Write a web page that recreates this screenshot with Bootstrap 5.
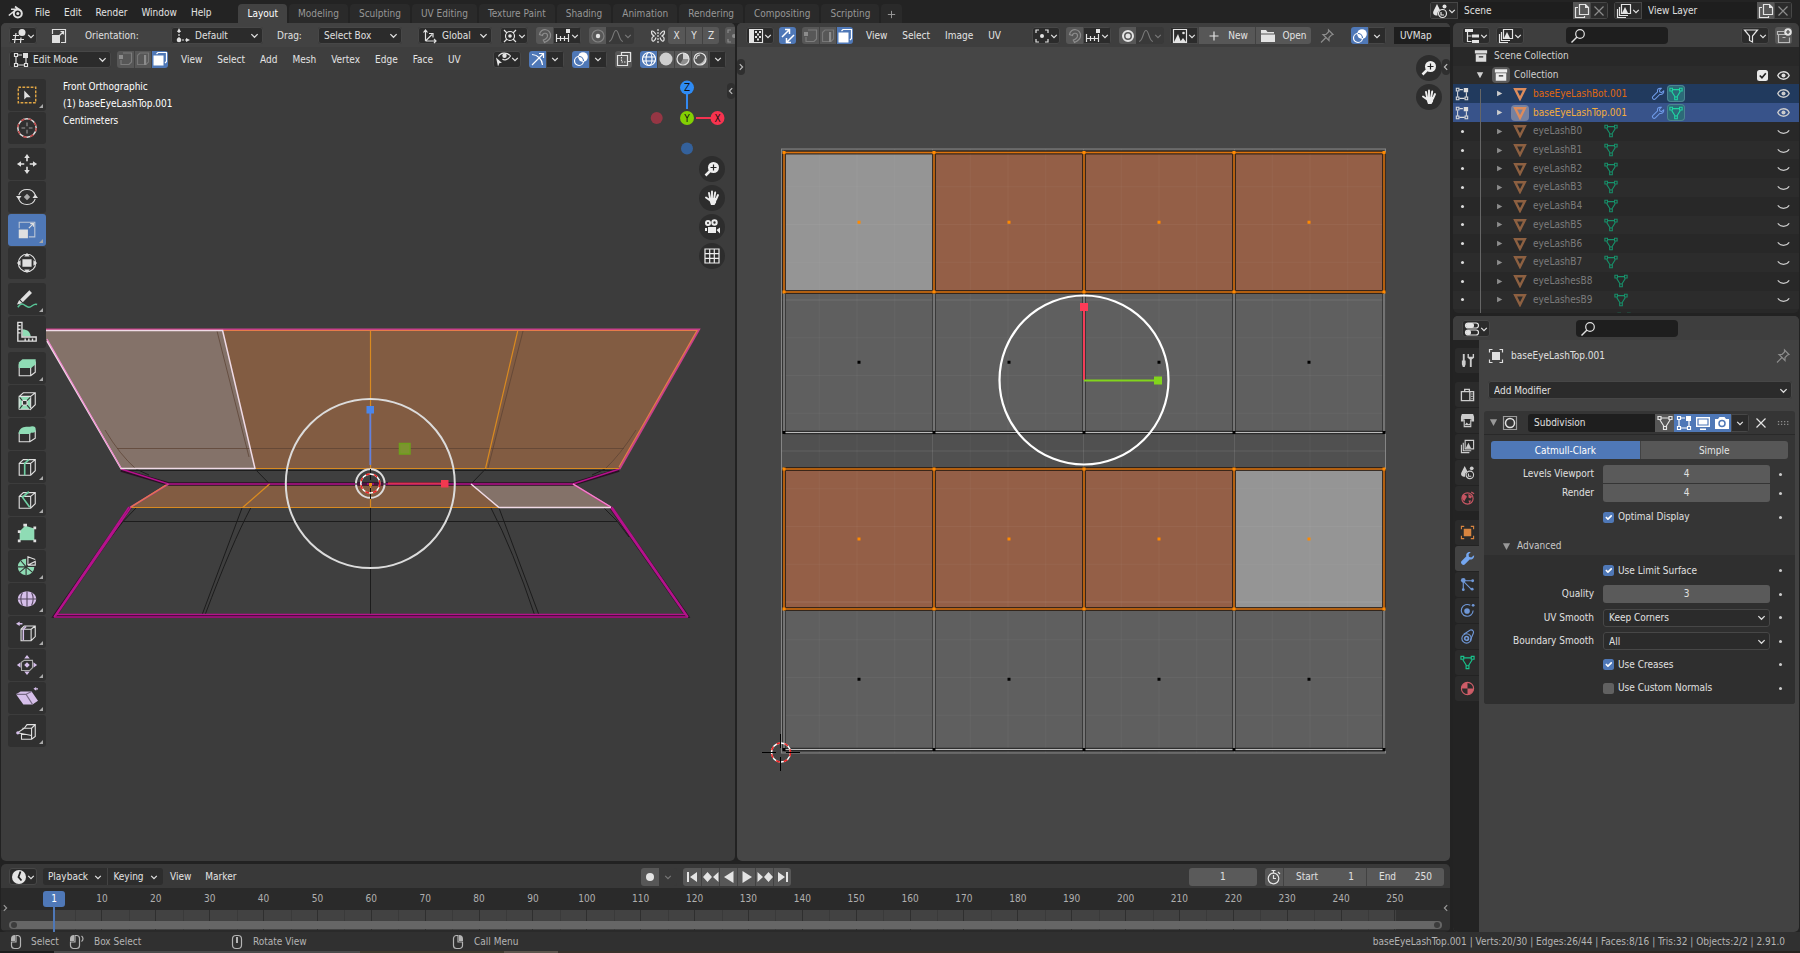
<!DOCTYPE html>
<html lang="en">
<head>
<meta charset="utf-8">
<meta name="viewport" content="width=device-width, initial-scale=1">
<title>Blender</title>
<link href="https://cdn.jsdelivr.net/npm/bootstrap@5.3.0/dist/css/bootstrap.min.css" rel="stylesheet">
<style>
:root{--blue:#4f78b7;--menu:#2b2b2b;--btn:#575757;--field:#1e1e1e;--edge:#474747}
html,body{height:100%}
body{background:#222;color:#e0e0e0;font:10px/16px "DejaVu Sans Condensed","DejaVu Sans",sans-serif;font-stretch:condensed;overflow:hidden}
button,input,select{font:inherit;color:inherit}
.app{height:100vh}
.ic{width:16px;height:16px;display:block;flex:none;fill:none;stroke:currentColor;stroke-width:1.2}
.f{fill:currentColor;stroke:none}
.ch{width:8px;height:8px}
[data-i]{display:inline-flex;flex:none}
.btn{--bs-btn-padding-x:0;--bs-btn-padding-y:0;--bs-btn-font-size:10px;--bs-btn-line-height:17px;--bs-btn-color:#e4e4e4;--bs-btn-hover-color:#fff;--bs-btn-border-width:0;--bs-btn-border-radius:3px;height:17px;display:inline-flex;align-items:center;justify-content:center;flex:none}
.sq{width:17px;background:var(--btn)}
.sq.on{background:var(--blue);color:#fff}
.dim{color:#8c8c8c}
.drop{width:28px;background:var(--menu);box-shadow:inset 0 0 0 1px var(--edge)}
.drop2{width:18px;background:var(--menu);box-shadow:inset 0 0 0 1px var(--edge)}
.off{background:#393939;color:#777;box-shadow:none}
.bar{display:flex;align-items:center;height:24px;padding-top:1px;flex:none;background:#3e3e3e}
.bar>*{flex:none}
.grp{display:flex;border-radius:3px;overflow:hidden;flex:none}
.grp .btn{border-radius:0}
.grp.cells .btn+.btn{border-left:1px solid #424242}
.form-select{height:17px;padding:0 14px 0 6px;font-size:10px;line-height:17px;color:#e0e0e0;background-color:var(--menu);border:0;box-shadow:inset 0 0 0 1px var(--edge);border-radius:3px;flex:none;background-size:9px 9px;background-position:right 4px center;background-image:url("data:image/svg+xml,%3csvg xmlns='http://www.w3.org/2000/svg' viewBox='0 0 10 10'%3e%3cpath fill='none' stroke='%23ddd' stroke-width='1.4' d='M1.5 3.5 5 7l3.5-3.5'/%3e%3c/svg%3e")}
.icsel{position:relative;display:flex;flex:none}
.icsel>[data-i]{position:absolute;left:4px;top:1px;pointer-events:none}
.icsel .form-select{padding-left:24px}
.w74{width:74px}.w84{width:84px}.w92{width:92px}.w102{width:102px}
.form-control{height:18px;min-height:0;padding:0 6px;font-size:10px;line-height:18px;color:#e0e0e0;background:var(--field);border:0;border-radius:0}
.mbtn{padding:0 7px;background:transparent}
.menus{display:flex;gap:1px;margin-left:6px}
.top{height:23px;background:#232323}
.top .nav-tabs{gap:2px;margin-left:20px}
.top .nav-link{height:19px;padding:0 9px;line-height:19px;color:#979797;background:#2a2a2a;border:0;border-radius:4px 4px 0 0}
.top .nav-link.active{background:#424242;color:#fff}
.top .form-control{width:115px;height:17px}
.ed{border-radius:5px;overflow:hidden;display:flex;flex-direction:column;min-width:0}
.v3d{flex:734 1 0;background:#3c3c3c}
.uved{flex:713 1 0;background:#464646}
.stage{position:relative;flex:1 1 0;min-height:0}
.stage>svg{position:absolute;inset:0;width:100%;height:100%}
.over{position:absolute;z-index:2}
.tools{left:7px;top:32px;display:flex;flex-direction:column;gap:4px}
.tools>div{display:flex;flex-direction:column;gap:1px}
.tools .btn{width:38px;height:32px;border-radius:3px;background:#303030;position:relative}
.tools .btn.on{background:var(--blue)}
.tools .ic{width:22px;height:22px;color:#e0e0e0}
.tools .more::after{content:"";position:absolute;right:3px;bottom:3px;border:2px solid;border-color:transparent #aaa #aaa transparent}
.mint{fill:#8fdcb5;stroke:none}.lilac{fill:#d6bfea;stroke:none}
.navb{right:10px;display:flex;flex-direction:column;gap:3px}
.navb .btn{width:26px;height:26px;border-radius:50%;background:#2d2d2d;color:#eee}
.info{left:62px;top:31px;line-height:17px;color:#fff}
.flap{width:8px;height:16px;background:#2f2f2f;border-radius:4px;color:#bbb;display:flex;align-items:center}
.side{width:346px;flex:none}
.outl{height:290px;background:#282828;flex:none}
.olist{display:grid;grid-template-rows:repeat(15,minmax(0,1fr));height:281px;position:relative;flex:none}
.olist>div{display:flex;align-items:center;padding-left:1px;color:#7c7c7c}
.olist>div>span{display:flex;align-items:center}
.olist>div:nth-child(even){background:#2c2c2c}
.olist>.s1{background:#213a5e!important;color:#e0690f}
.olist>.s2{background:#38538a!important;color:#f4ad3c}
.olist .c0{width:16px;height:16px;justify-content:center;color:#ddd}
.olist .tri{width:8px;margin-left:26px;color:#8d8d8d}
.olist .oi{width:18px;height:16px;margin:0 4px 0 7px;border-radius:4px;justify-content:center}
.olist .nameless{width:62px}
.dotm{width:3px;height:3px;border-radius:50%;background:#ddd}
.branch{position:absolute;left:27px;top:42px;width:1px;bottom:0;background:#666}
.chip{border-radius:4px;background:#2c6a78;box-shadow:inset 0 0 0 1px #4d8490;width:18px;height:17px;justify-content:center}
.chipg{background:#5a5a5a}
.props{flex:1 1 0;background:#424242}
.ptabs{width:26px;background:#232323;padding:8px 0 0 2px;display:flex;flex-direction:column;gap:1px;flex:none}
.ptabs .btn{width:24px;height:25px;border-radius:3px 0 0 3px;background:#2b2b2b}
.ptabs .btn.on{background:#424242}
.ptabs .sep{height:7px}
.panel{margin:12px 4px 0 5px;background:#353535;border-radius:3px;overflow:hidden}
.phead{height:24px;display:flex;align-items:center;border-bottom:1px solid #292929}
.prow{display:grid;grid-template-columns:110px 167px 1fr;column-gap:9px;align-items:center}
.prow>label:first-child,.prow>span:first-child{text-align:right}
.num{background:#5a5a5a;text-align:center;border-radius:3px}
.prow .dotm{justify-self:start;background:#ccc}
.form-check-input{width:11px;height:11px;margin:0 4px 0 0;border:0;border-radius:2px;background-color:#616161;float:none;flex:none}
.form-check-input:checked{background-color:var(--blue)}
.form-check-input.chk:checked{background-color:#e8e8e8;background-image:url("data:image/svg+xml,%3csvg xmlns='http://www.w3.org/2000/svg' viewBox='0 0 20 20'%3e%3cpath fill='none' stroke='%23222' stroke-width='3' d='m5 10 4 4 7-8'/%3e%3c/svg%3e")}
.mf{width:19px;height:18px}
.pl{width:18px;height:18px}
.sub{background:#2f2f2f;padding:4px 0}
.subg{display:grid;grid-template-rows:repeat(6,1fr);height:141px}
.tl{height:68px;background:#2a2a2a;flex:none;position:relative}
.nums{height:22px;padding:0 28px 0 74px;display:flex;color:#b0b0b0;align-items:center}
.nums span,.ticks span{flex:1 1 0;text-align:center}
.ticks{height:20px;padding:0 28px 0 74px;display:flex;background:linear-gradient(90deg,#373737 53px,#424242 53px,#424242 calc(100% - 54px),#333 calc(100% - 54px))}
.ticks span{background:linear-gradient(#2f2f2f,#2f2f2f) 50% 0/1px 100% no-repeat,linear-gradient(#3a3a3a,#3a3a3a) 0 0/1px 100% no-repeat}
.scr{left:8px;right:8px;bottom:3px;height:8px;border-radius:4px;background:#666}
.scr::before,.scr::after{content:"";position:absolute;top:1px;width:6px;height:6px;border-radius:50%;background:#3c3c3c}
.scr::before{left:2px}.scr::after{right:2px}
.now{left:42px;top:27px;width:22px;height:16px;border-radius:3px;background:var(--blue);color:#fff;text-align:center;line-height:16px}
.now::after{content:"";position:absolute;left:10px;top:16px;width:2px;height:25px;background:var(--blue)}
.nf{background:#585858;height:18px;display:flex;align-items:center;padding:0 12px;border-left:1px solid #424242}
.nf input{width:26px;background:none;border:0;padding:0;text-align:right}
.status{height:19px;background:#303030;color:#b4b4b4;flex:none;padding:0 15px 0 8px}
.under{height:2px;flex:none;background:linear-gradient(90deg,#1c1c1c 3%,#4a4a4a 3% 20%,#3e3a2e 20% 28%,#5c544c 28% 31%,#37302a 31% 80%,#26211e)}
.gz text{font:10px "DejaVu Sans Condensed","DejaVu Sans",sans-serif;text-anchor:middle;fill:#111}
</style>
</head>
<body>
<svg width="0" height="0" class="position-absolute"><defs>
<symbol id="chev" viewBox="0 0 10 10"><path d="M1.5 3.5 5 7l3.5-3.5" stroke-width="1.5"/></symbol>
<symbol id="lt" viewBox="0 0 10 10"><path d="M6.5 1.5 3 5l3.5 3.5" stroke-width="1.5"/></symbol>
<symbol id="gt" viewBox="0 0 10 10"><path d="M3.5 1.5 7 5 3.5 8.5" stroke-width="1.5"/></symbol>
<symbol id="dn" viewBox="0 0 10 10"><path class="f" d="M1 1.500h8L5 9z"/></symbol>
<symbol id="rt" viewBox="0 0 10 10"><path class="f" d="M1.500 1v8L9 5z"/></symbol>
<symbol id="logo" viewBox="0 0 16 16"><circle cx="9.800" cy="9.500" r="4" stroke-width="2"/><circle class="f" cx="9.800" cy="9.500" r="1.500"/><path stroke-width="1.600" d="M.8 11.500 8.500 5.300H3M7 2.500l6 4.500"/></symbol>
<symbol id="v3d" viewBox="0 0 16 16"><path d="M2 7.500h6M1 11.500h12M5 5 3.500 15M10 9.500 9.500 15"/><circle class="f" cx="11" cy="4.500" r="3.500"/></symbol>
<symbol id="scalei" viewBox="0 0 16 16"><path d="M1.500 6V1.500h13v13H10"/><path class="f" d="M1 7h8v8H1z"/><path d="m8.500 7.500 4-4M9.500 3.500h3v3"/></symbol>
<symbol id="ori" viewBox="0 0 16 16"><path d="M4 3v7M4 12h8" stroke-dasharray="2 1"/><path class="f" d="M4 0 6 4H2zM15 12l-4-2v4z"/><circle class="f" cx="4" cy="12" r="2.300"/></symbol>
<symbol id="glob" viewBox="0 0 16 16"><path d="M3.500 13V3M3.500 13h10M3.500 13 10 6.500M1.500 4.500 3.500 2l2 2.500M12 11l2 2-2 2M7 5.500h4v4"/></symbol>
<symbol id="pivot" viewBox="0 0 16 16"><circle cx="8" cy="8" r="4.500"/><circle class="f" cx="8" cy="8" r="1.800"/><path d="m2 2 3 3M14 2l-3 3M2 14l3-3M14 14l-3-3"/></symbol>
<symbol id="bpiv" viewBox="0 0 16 16"><path d="M2 5V2h3M11 2h3v3M14 11v3h-3M5 14H2v-3"/><circle class="f" cx="8" cy="8" r="2"/></symbol>
<symbol id="mag" viewBox="0 0 16 16"><path d="M2.500 6.500A5.500 5.500 0 0 1 13.500 8c0 3-3 5-6 6.500l-1.200-2.500C9 11 10.500 9.500 10.500 8A2.500 2.500 0 0 0 5.500 7.500z"/></symbol>
<symbol id="snapi" viewBox="0 0 16 16"><path d="M1.500 6v8M5.500 8v5M9.500 8v5M13.500 6v8M1.500 10.500h12"/><path class="f" d="M11 1h4v4h-4z"/></symbol>
<symbol id="prop" viewBox="0 0 16 16"><circle class="f" cx="8" cy="8" r="2.200"/><circle cx="8" cy="8" r="6" opacity=".3"/></symbol>
<symbol id="prop2" viewBox="0 0 16 16"><circle class="f" cx="8" cy="8" r="2.500"/><circle cx="8" cy="8" r="5" stroke-width="2"/></symbol>
<symbol id="fall" viewBox="0 0 16 16"><path d="M1 13.500c4 0 4-11 7-11s3 11 7 11"/></symbol>
<symbol id="mir" viewBox="0 0 16 16"><path d="M8 1v14" stroke-dasharray="2 1"/><path d="M6 6.500C4 3 1.500 2 1.500 4s1 3.500 3 4c-2 .5-3 2-2.500 4s3 1.500 4-2.500M10 6.500C12 3 14.500 2 14.500 4s-1 3.500-3 4c2 .5 3 2 2.500 4s-3 1.500-4-2.500"/></symbol>
<symbol id="edit" viewBox="0 0 16 16"><path d="M3 5v6M5 13h6M13 6v5M5 3h4" /><path d="M1.500 1.500h3v3h-3zM1.500 11.500h3v3h-3zM11.500 11.500h3v3h-3z"/><path class="f" d="M10 1h5v5h-5z"/></symbol>
<symbol id="sv" viewBox="0 0 16 16"><path d="M5 2h8.500v9L11 13.500H3V9" opacity=".7"/><path class="f" d="M1 4h4v4H1z"/></symbol>
<symbol id="se" viewBox="0 0 16 16"><path d="M2.500 4.500 5 2h8.500v9L11 13.500H2.500z" opacity=".6"/><path class="f" d="M9 4h2.200v10H9z"/></symbol>
<symbol id="sf" viewBox="0 0 16 16"><path d="M4.500 3 6 1.500h8.500v9L13 12"/><path class="f" d="M1.500 4.500h10v10h-10z"/></symbol>
<symbol id="vis" viewBox="0 0 16 16"><path d="M3.500 5.500C5 1.500 12 .5 15.500 5 13 9 9 9.500 7.500 8"/><circle class="f" cx="9.500" cy="4.800" r="2.200"/><path class="f" d="M1 6.500l6 5.500H4.500L3 15.500z"/></symbol>
<symbol id="giz" viewBox="0 0 16 16"><path d="M2 3.500A11 11 0 0 1 12.500 14M2 14 13 3M9 2.500h4.500V7"/></symbol>
<symbol id="ovl" viewBox="0 0 16 16"><circle class="f" cx="10" cy="6" r="4.800"/><circle cx="6" cy="10" r="4.500"/><path d="M6 5.500A4.500 4.500 0 0 1 10.500 10" stroke="#4f78b7"/></symbol>
<symbol id="xray" viewBox="0 0 16 16"><path d="M5.500 4V1.500h9v9H12M1.500 4.500h10v10h-10z"/><path d="M5.500 6v5h4" stroke-dasharray="1.500 1"/></symbol>
<symbol id="wire" viewBox="0 0 16 16"><circle cx="8" cy="8" r="6.500"/><ellipse cx="8" cy="8" rx="3" ry="6.500"/><path d="M1.500 6h13M1.500 10h13"/></symbol>
<symbol id="solid" viewBox="0 0 16 16"><circle class="f" cx="8" cy="8" r="6.500" opacity=".85"/></symbol>
<symbol id="matp" viewBox="0 0 16 16"><circle cx="8" cy="8" r="6"/><path class="f" d="M8 8V2a6 6 0 0 1 6 6z" opacity=".85"/><path class="f" d="M8 8h6a6 6 0 0 1-9 5z" opacity=".4"/></symbol>
<symbol id="rend" viewBox="0 0 16 16"><circle cx="8" cy="8" r="6"/><path d="M4 8a4 4 0 0 1 4-4"/><path class="f" d="M14 8a6 6 0 0 1-9 5c5 0 7-3 8-7z" opacity=".7"/></symbol>
<symbol id="uve" viewBox="0 0 16 16"><path class="f" d="M1 1h5v14H1z"/><path d="M6 1.500h8.500v13H6"/><path d="M7 4h2M11 4h2M9 6.500h2M7 9h2M11 9h2M9 11.500h2" stroke-width="2"/></symbol>
<symbol id="sync" viewBox="0 0 16 16"><path d="m2 9 7-7M5 1.500h4.500V6M14 7l-7 7M11 14.500H6.500V10" stroke-width="1.500"/></symbol>
<symbol id="img" viewBox="0 0 16 16"><path d="M1.500 1.500h13v13h-13z"/><path class="f" d="M2 14 6 6l3 8zM8 14l3-4 3 4z"/><circle class="f" cx="11.500" cy="5" r="1.300"/></symbol>
<symbol id="plus" viewBox="0 0 16 16"><path d="M8 3.500v9M3.500 8h9"/></symbol>
<symbol id="fold" viewBox="0 0 16 16"><path class="f" d="M1 2h5l1.500 2H14v1.500H1zM1 6.500h14V14H1z"/></symbol>
<symbol id="pin" viewBox="0 0 16 16"><path d="m9.500 2 4.500 4.500-1.500.5-2.500 2.500v3L4 6.500h3L9.500 4zM7 9.500l-5 5"/></symbol>
<symbol id="scn" viewBox="0 0 16 16"><path class="f" d="M5 1l3 6c-2 1-3 3-2.500 5.500-4 0-5-2-4-4.500z"/><circle cx="10.500" cy="10.500" r="4"/><circle class="f" cx="12.500" cy="3.500" r="2"/><path d="M9 9v3h3"/></symbol>
<symbol id="lay" viewBox="0 0 16 16"><path d="M5.500 1.500h9v9h-9zM3.500 4v8.500H12M1.500 6v8.500H10"/><path class="f" d="m6 10 3-6 3 6z"/></symbol>
<symbol id="copy" viewBox="0 0 16 16"><path d="M5.500 1.500h6l3 3v7h-9zM4 4.500H1.500v10h9V13"/><path class="f" d="M11 1v4h4z"/></symbol>
<symbol id="x" viewBox="0 0 16 16"><path d="m3.500 3.500 9 9M12.500 3.500l-9 9"/></symbol>
<symbol id="tree" viewBox="0 0 16 16"><path class="f" d="M1 1h8v3H1zM8 6.500h7v3H8zM8 12h7v3H8z"/><path d="M3.500 4v9.500h4M3.500 8h4"/></symbol>
<symbol id="find" viewBox="0 0 16 16"><circle cx="10" cy="6" r="4.300"/><path d="m7 9-5.500 5.500" stroke-width="1.500"/></symbol>
<symbol id="filt" viewBox="0 0 16 16"><path d="M1.500 2h13L9.500 8v6l-3-1.500V8z"/></symbol>
<symbol id="ncol" viewBox="0 0 16 16"><path d="M8 3.500H1.500v3h13M2.500 6.500v8h11v-5M6.500 9.500h3" opacity=".7"/><circle class="f" cx="12" cy="4" r="3.800"/><path stroke="#444" d="M12 2v4M10 4h4"/></symbol>
<symbol id="coll" viewBox="0 0 16 16"><path class="f" d="M1 1.500h14V5H1zM2 6h12v8.500H2z"/><path stroke="#282828" stroke-width="1.500" d="M5.500 9h5"/></symbol>
<symbol id="eye" viewBox="0 0 16 16"><path d="M1 8c3-6 11-6 14 0-3 6-11 6-14 0z" stroke-width="1.800"/><circle class="f" cx="8" cy="8" r="2.500"/></symbol>
<symbol id="shut" viewBox="0 0 16 16"><path d="M1 6.500c3 5 11 5 14 0" stroke-width="1.400"/></symbol>
<symbol id="obj" viewBox="0 0 16 16"><path d="M2.500 2.500h11L8 13.500z" stroke-width="2.800"/></symbol>
<symbol id="mesh" viewBox="0 0 16 16"><path d="M4 3h8M3 5l4 6.500M13 5 9 11.500"/><path d="M1 1.500h3v3H1zM12 1.500h3v3h-3zM6.500 11.500h3v3h-3z"/></symbol>
<symbol id="wr" viewBox="0 0 16 16"><path d="M14.500 4.500 12 6.500l-2-1-.3-2 2-2c-3-.8-5 1.500-4.200 4L2 11c-1.300 1.500 1 4.300 3 2.500l5-5c3 .5 5-1.500 4.500-4z"/></symbol>
<symbol id="wrf" viewBox="0 0 16 16"><path class="f" d="M15 4.500 12 7 9.500 6l-.3-2.500 2.300-2.500C8 .5 6 3 6.800 5.500L1.500 11c-1.500 2 1.500 5 3.500 3.300L10.300 9C13.500 9.500 15.500 7 15 4.500z"/></symbol>
<symbol id="prp" viewBox="0 0 16 16"><rect x="1.500" y="2" width="13" height="5" rx="2.500"/><rect x="1.500" y="9" width="13" height="5" rx="2.500"/><rect class="f" x="2" y="2" width="8" height="5" rx="2"/><rect class="f" x="2" y="9" width="5" height="5" rx="2"/></symbol>
<symbol id="tool" viewBox="0 0 16 16"><path class="f" d="M3 1h2v7H3zM2 8h4v4l-1 3H3l-1-3zM8 1v4l2.500 2v8h2V7L15 5V1h-1.500v3h-4V1z"/></symbol>
<symbol id="cam" viewBox="0 0 16 16"><path d="M1.500 5h9v9.500h-9zM5 5V2.500h5V5M10.500 5h4v9.500h-4" stroke-width="1.400"/><path d="M12 7.500h1.500M12 10h1.500M12 12.500h1.500"/></symbol>
<symbol id="out" viewBox="0 0 16 16"><path class="f" d="M2 1h12l1 3v5h-3V6.500H4V9H1V4z"/><path d="M4.500 7v7.500h7V7"/><path class="f" d="m5 13 2-3 2 2 2-1v2z"/></symbol>
<symbol id="wld" viewBox="0 0 16 16"><circle cx="8" cy="8" r="6"/><path class="f" d="M3 4c3 0 5 1 4 3s-2 2-2 4c-2-1-4-4-2-7zM9 3l4 3-2 2-2-1zM9 10l3 0-2 3z"/><path d="m12 1 3 2"/></symbol>
<symbol id="bobj" viewBox="0 0 16 16"><path d="M1.500 4.500v-3h3M11.500 1.500h3v3M14.500 11.500v3h-3M4.500 14.500h-3v-3"/><path class="f" d="M4 4h8v8H4z"/></symbol>
<symbol id="part" viewBox="0 0 16 16"><path d="M3.500 5v9M5 4h8M4.500 5.500l8 8"/><circle class="f" cx="3.500" cy="3.500" r="2.500"/><circle class="f" cx="13.500" cy="4" r="1.500"/><circle class="f" cx="13" cy="13" r="1.500"/><circle class="f" cx="3.500" cy="13.500" r="1.500"/></symbol>
<symbol id="phys" viewBox="0 0 16 16"><path d="M11 2.500A6.300 6.300 0 1 0 14 8"/><circle class="f" cx="7.500" cy="8.500" r="3"/><circle class="f" cx="14" cy="2.500" r="1.500"/></symbol>
<symbol id="cons" viewBox="0 0 16 16"><path d="M4 5.500 11 1c3-.5 4 2 3 4l-3 7"/><circle cx="7" cy="10" r="5"/><circle cx="7" cy="10" r="2" stroke-width="1.800"/></symbol>
<symbol id="matl" viewBox="0 0 16 16"><circle cx="8" cy="8" r="6.500"/><path class="f" d="M8 1.500V8H1.500A6.500 6.500 0 0 1 8 1.500zM8 8h6.500A6.500 6.500 0 0 1 8 14.500z"/></symbol>
<symbol id="subd" viewBox="0 0 16 16"><path d="M1.500 1.500h13v13h-13z" opacity=".6"/><circle cx="8" cy="8" r="4.500" stroke-width="1.500"/></symbol>
<symbol id="mon" viewBox="0 0 16 16"><path class="f" d="M1 2h14v10H1zM5 13.500h6V15H5z"/><path stroke="#4f78b7" d="M3 4h10v6H3z"/></symbol>
<symbol id="snap" viewBox="0 0 16 16"><path class="f" d="M1 4h3l1.500-2h5L12 4h3v10H1z"/><circle cx="8" cy="8.500" r="3" stroke="#4f78b7" stroke-width="1.500"/></symbol>
<symbol id="grip" viewBox="0 0 16 16"><path d="M1 6.500h14M1 9.500h14" stroke-dasharray="1.500 2" stroke-width="1.500"/></symbol>
<symbol id="clk" viewBox="0 0 16 16"><circle class="f" cx="8" cy="8" r="7"/><path stroke="#222" stroke-width="1.800" d="m9.500 2.500-2 5.500 3 3.500"/></symbol>
<symbol id="rec" viewBox="0 0 16 16"><circle class="f" cx="8" cy="8" r="4"/></symbol>
<symbol id="t1" viewBox="0 0 16 16"><path class="f" d="M3 3h2v10H3zM13 3v10L6 8z"/></symbol>
<symbol id="t2" viewBox="0 0 16 16"><path class="f" d="M0 8l4.500-5L9 8l-4.500 5zM15.500 3v10L10 8z"/></symbol>
<symbol id="t3" viewBox="0 0 16 16"><path class="f" d="M12.500 2v12L3 8z"/></symbol>
<symbol id="t4" viewBox="0 0 16 16"><path class="f" d="M3.500 2v12L13 8z"/></symbol>
<symbol id="t5" viewBox="0 0 16 16"><path class="f" d="M16 8l-4.500-5L7 8l4.500 5zM.5 3v10L6 8z"/></symbol>
<symbol id="t6" viewBox="0 0 16 16"><path class="f" d="M11 3h2v10h-2zM3 3v10l7-5z"/></symbol>
<symbol id="stop" viewBox="0 0 16 16"><circle cx="7.500" cy="9.500" r="5.300"/><path d="M7.500 6v3.500H10M7.500 4V1M5.500 1.500h4M12 3l2 2"/></symbol>
<symbol id="m1" viewBox="0 0 16 16"><path d="M8 1.500h1.500a3 3 0 0 1 3 3v7a3 3 0 0 1-3 3h-3a3 3 0 0 1-3-3V8H8z"/><path class="f" d="M7 1v6H3V5a4 4 0 0 1 4-4z"/></symbol>
<symbol id="m1d" viewBox="0 0 16 16"><path d="M6 1.500h1.500a3 3 0 0 1 3 3v7a3 3 0 0 1-3 3h-3a3 3 0 0 1-3-3V8H6zM12.500 2c2 1.500 2 4 0 5.500" /><path class="f" d="M5 1v6H1V5a4 4 0 0 1 4-4z"/></symbol>
<symbol id="m2" viewBox="0 0 16 16"><rect x="3.500" y="1.500" width="9" height="13" rx="3.500"/><path class="f" d="M7 3h2v6H7z"/></symbol>
<symbol id="m3" viewBox="0 0 16 16"><path d="M8 1.500H6.500a3 3 0 0 0-3 3v7a3 3 0 0 0 3 3h3a3 3 0 0 0 3-3V8H8z"/><path class="f" d="M9 1v6h4V5a4 4 0 0 0-4-4z"/></symbol>
<symbol id="zm" viewBox="0 0 16 16"><circle class="f" cx="9.500" cy="6.500" r="5.500"/><path d="m6 10-4.500 4.500" stroke-width="2.500"/><path stroke="#222" d="M9.500 3.500v6M6.500 6.500h6"/></symbol>
<symbol id="hand" viewBox="0 0 16 16"><path d="M6 8 5 3M8 8V1.500M10.200 8l1-5.500M12 9.500l2-4.500M5.500 10 2 7.500" stroke-width="1.900" stroke-linecap="round"/><path class="f" d="M4.500 8h8l-.5 4.500L10.500 15H7z"/></symbol>
<symbol id="mov" viewBox="0 0 16 16"><circle cx="4" cy="4" r="2" stroke-width="2"/><circle cx="10.500" cy="3.500" r="2.200" stroke-width="2"/><path class="f" d="M4 8h8v6H4zM1 9h2v3H1zM12.500 11 16 8.500v6z"/></symbol>
<symbol id="grid" viewBox="0 0 16 16"><path d="M1 1h14v14H1zM5.700 1v14M10.300 1v14M1 5.700h14M1 10.300h14"/></symbol>
<!-- edit mode tools -->
<symbol id="a1" viewBox="0 0 24 24"><path d="M2.500 3.500h19v17h-19z" stroke="#e0a544" stroke-width="1.600" stroke-dasharray="3 1.500"/><path class="f" d="M9 7v10l2.500-2.500H16z"/></symbol>
<symbol id="a2" viewBox="0 0 24 24"><circle cx="12" cy="12" r="10" stroke-width="1.600"/><circle cx="12" cy="12" r="10" stroke="#b44" stroke-width="1.600" stroke-dasharray="4 4"/><path d="M12 6v4M12 14v4M6 12h4M14 12h4" opacity=".6"/></symbol>
<symbol id="a3" viewBox="0 0 24 24"><path class="f" d="m12 1 3 4.500H9zM12 23l3-4.500H9zM1 12l4.500-3v6zM23 12l-4.500-3v6z"/><path d="M12 5v4M12 15v4M5 12h4M15 12h4" stroke-width="1.800"/></symbol>
<symbol id="a4" viewBox="0 0 24 24"><path class="f" opacity=".7" d="m12 8.500 3.500 3.500-3.500 3.500L8.500 12z"/><path d="M3 10a9.500 9 0 0 1 18 0M3 14a9.500 9 0 0 0 18 0"/><path class="f" d="M0 11h6l-3 4zM24 13h-6l3-4z"/></symbol>
<symbol id="a5" viewBox="0 0 24 24"><path d="M3.500 10V3.500h17v16H14" opacity=".75"/><path class="f" d="M3 11.500h10V21H3z"/><path d="m14 10 5-5M15.500 5H19v3.500"/></symbol>
<symbol id="a6" viewBox="0 0 24 24"><circle cx="12" cy="12" r="9.500"/><path class="f" d="M7 8h10v8H7zM12 1l3 4H9zM12 23l3-4H9zM1 12l4-3v6zM23 12l-4-3v6z"/></symbol>
<symbol id="a7" viewBox="0 0 24 24"><path d="m6 14 10-10" stroke-width="4"/><path class="f" d="m1 18 2.500-5 3.500 3.500z"/><path stroke="#58c597" stroke-width="1.600" d="M2 21c5-8 8 0 12 0s5-5 9-3"/></symbol>
<symbol id="a8" viewBox="0 0 24 24"><path class="mint" d="M7 17V9c6 0 9 4 9 8z"/><path d="M2 1.500h4.500v16H22V22H2zM2 5h3M2 9h3M2 13h3M10 22v-3M14 22v-3M18 22v-3" stroke-width="1.500"/></symbol>
<symbol id="a9" viewBox="0 0 24 24"><path d="M3.500 8v12.500H16V8M16 20.500l5-4V5"/><path class="mint" d="M3 6l4-3.500h14.500V8L16.500 12H3z"/></symbol>
<symbol id="a10" viewBox="0 0 24 24"><path class="mint" d="M3 7h13v14H3z"/><path fill="#333" d="M7 11.500h5v5H7z"/><path d="M3.500 7 8 3h13v13l-5 5V7H3.500v14H16M16 7l5-4"/><path stroke="#333" d="m4 8 3 3.500M15.500 8 12 11.500M4 20.500l3-4M15.500 20.500l-3.500-4"/></symbol>
<symbol id="a11" viewBox="0 0 24 24"><path d="M3.500 10v10.500H15V11M15 20.500l6-4V8"/><path class="mint" d="M3 11c0-4 4-7 8-7h6l1 5-3 3H3z"/><circle cx="18" cy="7" r="3.500" class="mint"/></symbol>
<symbol id="a12" viewBox="0 0 24 24"><path d="M3.500 8 8 4h13v12l-5 5H3.500zM16 21V8M16 8l5-4M3.500 8H16"/><path stroke="#6fcfa3" stroke-width="1.800" d="M9.500 21V8L14 4"/></symbol>
<symbol id="a13" viewBox="0 0 24 24"><path d="M3.500 8 8 4h13v12l-5 5H3.500zM16 21V8M16 8l5-4M3.500 8H16"/><path stroke="#6fcfa3" stroke-width="1.800" d="m14 3-7 6 8 11"/></symbol>
<symbol id="a14" viewBox="0 0 24 24"><path class="mint" d="m4 10 6-6 10 3v13H4z"/><path class="f" d="M8 2h4v3H8zM19 5h3v3h-3zM2 9h3v3H2zM2 19h3v3H2zM19 19h3v3h-3z"/></symbol>
<symbol id="a15" viewBox="0 0 24 24"><path class="mint" d="M11 13V4a9 9 0 1 0 9 9z"/><path stroke="#333" d="m11 13-7 6M11 13v9M11 13l7 6M11 13H2M11 13 5 6"/><path d="M13 11V2l8 3M13 11l8-4v4z"/></symbol>
<symbol id="a16" viewBox="0 0 24 24"><path class="lilac" d="M2 12c0-11 20-11 20 0s-20 11-20 0z"/><path stroke="#55485f" d="M2 12h20M12 4v16M7 5c-2 4-2 10 0 14M17 5c2 4 2 10 0 14"/></symbol>
<symbol id="a17" viewBox="0 0 24 24"><path d="M5.500 9 9 5.500h12V17l-4.500 4.500h-11zM16.500 21.500V9M16.500 9 21 5.500M5.500 9h11"/><path stroke="#d6bfea" stroke-width="1.600" d="M8 21V9l3-3"/><path class="lilac" d="m0 3 4-2.500v1.800h3v1.500H4v1.700z"/></symbol>
<symbol id="a18" viewBox="0 0 24 24"><path d="M6 9l3-2h9v8l-3 3H6z" opacity=".7"/><path class="lilac" d="m12 1 3 4H9zM12 23l3-4H9zM1 12l4-3v6zM23 12l-4-3v6zM12 9l3 3-3 3-3-3z"/></symbol>
<symbol id="a19" viewBox="0 0 24 24"><path class="lilac" d="m0 8 5-3h12l7 10-6 4H8z"/><path stroke="#776a85" d="m0 8h11l7 11M11 8l6-3"/><path class="lilac" d="m19 2 3-2v1.300h2v1.400h-2V4z"/></symbol>
<symbol id="a20" viewBox="0 0 24 24"><path d="M9 9l3-4h9v13l-4 3H6v-6M7 9h10v12M17 9l4-4M1.500 14 17 17M1.500 14 9 9"/><circle cx="2" cy="14" r="1.800" class="lilac"/></symbol>
</defs></svg>

<div class="app d-flex flex-column">
<header class="top d-flex align-items-start flex-shrink-0">
  <span class="ms-2 mt-1" data-i="logo"></span>
  <nav class="d-flex ms-1 pt-1 lh-1">
    <button class="btn mbtn lh-1">File</button><button class="btn mbtn lh-1">Edit</button><button class="btn mbtn lh-1">Render</button><button class="btn mbtn lh-1">Window</button><button class="btn mbtn lh-1">Help</button>
  </nav>
  <ul class="nav nav-tabs border-0 mt-1 flex-nowrap">
    <li><a class="nav-link active" href="#">Layout</a></li><li><a class="nav-link" href="#">Modeling</a></li><li><a class="nav-link" href="#">Sculpting</a></li><li><a class="nav-link" href="#">UV Editing</a></li><li><a class="nav-link" href="#">Texture Paint</a></li><li><a class="nav-link" href="#">Shading</a></li><li><a class="nav-link" href="#">Animation</a></li><li><a class="nav-link" href="#">Rendering</a></li><li><a class="nav-link" href="#">Compositing</a></li><li><a class="nav-link" href="#">Scripting</a></li><li><a class="nav-link px-1" href="#" aria-label="Add workspace"><span class="mt-1" data-i="plus" data-s="13"></span></a></li>
  </ul>
  <div class="d-flex ms-auto me-2" style="padding-top:2px;gap:6px">
    <div class="grp"><button class="btn drop"><i data-i="scn"></i><i data-i="chev"></i></button><input class="form-control" value="Scene" aria-label="Scene"><button class="btn sq"><i data-i="copy"></i></button><button class="btn drop2 dim"><i data-i="x"></i></button></div>
    <div class="grp"><button class="btn drop"><i data-i="lay"></i><i data-i="chev"></i></button><input class="form-control" value="View Layer" aria-label="View layer"><button class="btn sq"><i data-i="copy"></i></button><button class="btn drop2 dim"><i data-i="x"></i></button></div>
  </div>
</header>

<div class="d-flex flex-fill" style="min-height:0;gap:3px;padding:0 1px">
 <div class="d-flex flex-column flex-fill" style="min-width:0;gap:3px">
  <div class="d-flex flex-fill" style="min-height:0;gap:2px">

   <section class="ed v3d">
    <div class="bar ps-2 overflow-hidden" style="background:#424242">
      <button class="btn drop"><i data-i="v3d"></i><i data-i="chev"></i></button>
      <span style="margin:0 18px 0 14px" data-i="scalei"></span>
      <label for="ori1" style="width:86px">Orientation:</label>
      <span class="icsel"><i data-i="ori"></i><select id="ori1" class="form-select w92"><option>Default</option></select></span>
      <label for="drag" style="margin-left:14px;width:41px">Drag:</label>
      <select id="drag" class="form-select w84"><option>Select Box</option></select>
      <span class="icsel ms-3"><i data-i="glob"></i><select class="form-select w74" aria-label="Transform orientation"><option>Global</option></select></span>
      <button class="btn drop ms-2"><i data-i="pivot"></i><i data-i="chev"></i></button>
      <span class="grp ms-2"><button class="btn sq dim"><i data-i="mag"></i></button><button class="btn drop"><i data-i="snapi"></i><i data-i="chev"></i></button></span>
      <span class="grp ms-2"><button class="btn sq"><i data-i="prop"></i></button><button class="btn drop off"><i data-i="fall"></i><i data-i="chev"></i></button></span>
      <span style="margin:0 2px 0 16px" data-i="mir"></span>
      <span class="grp cells"><button class="btn sq">X</button><button class="btn sq">Y</button><button class="btn sq">Z</button></span>
      <button class="btn sq dim" style="margin-left:6px"><i data-i="bpiv"></i></button>
    </div>
    <div class="stage">
     <svg class="gz" viewBox="1 47 734 814" preserveAspectRatio="xMidYMid slice">
      <rect x="-500" y="47" width="1800" height="23" fill="#404040" opacity=".6"/>
      <path fill="#3f3f3f" d="M130 508H611L687 616H55zM121 469H619L573 484H168z"/>
      <path fill="#847269" d="M20 330H222.600L255 469H121L47 341z"/>
      <path fill="#825c42" d="M222.600 330H699L619.500 469H255z"/>
      <path fill="#825c42" d="M168.500 484H471L499 507.500H130z"/>
      <path fill="#847269" d="M471 484H573L611 507.500H499z"/>
      <g fill="none" stroke="#5c4334" stroke-opacity=".75"><path d="M117 448.500H624M217 331 249 457M523 331 488 468M105 430Q120 455 136 469M636 430Q620 455 605 469"/></g>
      <g fill="none" stroke="#1c1c1c"><path d="M121 470.500H619M123 521.500H617M136 469 149 475M605 469 592 475M255 469 269.600 484M485.500 469 471 484M242 508 202 615M250.700 508Q232 543 205 615M499 508 539 615M491 508Q513 550 534.600 615M136 508 123.500 521 111 537M604 508 617 521 629 537M370.500 508V615"/></g>
      <g fill="none" stroke="#2a1024" stroke-width="3.500"><path d="M121 470 168.500 484H573L619 470M130 507.500 54.700 616H687L611 507.500"/></g>
      <g fill="none" stroke="#b5128c" stroke-width="1.600"><path d="M121 469 168.500 484H573L619.500 469M130.500 508 56 615.500M129 507 54 617M611 508 686 615.500M612 507 688 617M54 617H688M56 614.500H686"/></g>
      <g fill="none" stroke-width="1.200"><path stroke="#d98a20" d="M255 468.500H619M485.500 468.500 517.700 331M370.500 331V468M130 507.500H499M269.600 484 242.700 507.500M370.500 484V507"/>
      <path stroke="#c8408a" stroke-width="2" d="M20 329.500H699L619.500 469M168.500 484 130 507.500M573 484 611 507.500"/>
      <path stroke="#e77b4a" d="M222 330.500H697L619 467M166 485 131 507"/>
      <path stroke="#f0dbe6" stroke-width="1.500" d="M30 330.500H222.600L255 468.500H121L47 341M471 484 499 507.500H611"/><path stroke="#f08ad0" d="M47 339 121 468M573 484 611 507"/></g>
      <g fill="none" stroke="#dcdcdc" stroke-width="2"><circle cx="370.300" cy="483.500" r="84.500"/><circle cx="370.300" cy="483.500" r="14.300"/></g>
      <path stroke="#111" d="M355 484h12M374 484h12M370.500 469v11M370.500 488v11"/>
      <circle cx="370.300" cy="483.500" r="9.500" fill="none" stroke="#fff" stroke-width="1.500"/><circle cx="370.300" cy="483.500" r="9.500" fill="none" stroke="#e22" stroke-width="1.500" stroke-dasharray="4 4"/>
      <path stroke="#6080e0" stroke-width="1.800" d="M370.300 413V465"/><path stroke="#d93350" stroke-width="1.800" d="M388 483.500H441"/>
      <path fill="#4a86ea" d="M366.500 406h7.500v7.500h-7.500z"/><path fill="#f2394f" d="M441 480h7.500v7.500H441z"/><path fill="#7d9430" stroke="#6ea01c" stroke-width="1.500" d="M399.500 443.500h10.500v10.500h-10.500z"/>
      <path fill="#ef8a10" d="M369 483h3v3h-3z"/>
      <path stroke="#3389f0" stroke-width="2" d="M687 94v15"/><path stroke="#f53350" stroke-width="2" d="M696 118h15"/>
      <circle cx="687" cy="87.600" r="7" fill="#2e8bf4"/><circle cx="687" cy="118" r="7" fill="#83d003"/><circle cx="717.500" cy="118" r="7" fill="#f8334f"/>
      <circle cx="656.700" cy="118" r="6" fill="#953644"/><circle cx="687" cy="148.500" r="6" fill="#34619b"/>
      <text x="687" y="91">Z</text><text x="687" y="122">Y</text><text x="717.500" y="122">X</text>
     </svg>
     <div class="over d-flex align-items-center start-0 end-0 top-0 ps-2" style="height:24px;padding-right:9px">
      <span class="icsel"><i data-i="edit"></i><select class="form-select w102" aria-label="Mode"><option>Edit Mode</option></select></span>
      <span class="grp cells" style="margin-left:6px"><button class="btn sq dim"><i data-i="sv"></i></button><button class="btn sq dim"><i data-i="se"></i></button><button class="btn sq on"><i data-i="sf"></i></button></span>
      <nav class="menus"><button class="btn mbtn">View</button><button class="btn mbtn">Select</button><button class="btn mbtn">Add</button><button class="btn mbtn">Mesh</button><button class="btn mbtn">Vertex</button><button class="btn mbtn">Edge</button><button class="btn mbtn">Face</button><button class="btn mbtn">UV</button></nav>
      <div class="d-flex ms-auto gap-2"><button class="btn drop"><i data-i="vis"></i><i data-i="chev"></i></button>
      <span class="grp"><button class="btn sq on"><i data-i="giz"></i></button><button class="btn drop2"><i data-i="chev"></i></button></span>
      <span class="grp"><button class="btn sq on"><i data-i="ovl"></i></button><button class="btn drop2"><i data-i="chev"></i></button></span>
      <button class="btn sq"><i data-i="xray"></i></button>
      <span class="grp cells"><button class="btn sq on"><i data-i="wire"></i></button><button class="btn sq"><i data-i="solid"></i></button><button class="btn sq"><i data-i="matp"></i></button><button class="btn sq"><i data-i="rend"></i></button><button class="btn drop2"><i data-i="chev"></i></button></span></div>
     </div>
     <div class="over info">Front Orthographic<br>(1) baseEyeLashTop.001<br>Centimeters</div>
     <div class="over tools" id="tools"></div>
     <div class="over navb" style="top:109px"><button class="btn"><i data-i="zm"></i></button><button class="btn"><i data-i="hand"></i></button><button class="btn"><i data-i="mov"></i></button><button class="btn"><i data-i="grid"></i></button></div>
     <div class="over flap end-0" style="top:36px"><i data-i="lt" data-s="8"></i></div>
    </div>
   </section>

   <section class="ed uved">
    <div class="bar" style="padding-left:9px">
      <button class="btn drop"><i data-i="uve"></i><i data-i="chev"></i></button>
      <button class="btn sq on" style="margin-left:5px"><i data-i="sync"></i></button>
      <span class="grp cells" style="margin-left:6px"><button class="btn sq dim"><i data-i="sv"></i></button><button class="btn sq dim"><i data-i="se"></i></button><button class="btn sq on"><i data-i="sf"></i></button></span>
      <nav class="menus"><button class="btn mbtn">View</button><button class="btn mbtn">Select</button><button class="btn mbtn">Image</button><button class="btn mbtn">UV</button></nav>
      <div class="d-flex ms-auto">
       <button class="btn drop"><i data-i="bpiv"></i><i data-i="chev"></i></button>
       <span class="grp" style="margin-left:6px"><button class="btn sq dim"><i data-i="mag"></i></button><button class="btn drop"><i data-i="snapi"></i><i data-i="chev"></i></button></span>
       <span class="grp ms-2"><button class="btn sq"><i data-i="prop2"></i></button><button class="btn drop off"><i data-i="fall"></i><i data-i="chev"></i></button></span>
       <span class="grp cells" style="margin-left:6px"><button class="btn drop"><i data-i="img"></i><i data-i="chev"></i></button><button class="btn sq" style="width:57px;gap:6px"><i data-i="plus"></i>New</button><button class="btn sq" style="width:56px;gap:6px"><i data-i="fold"></i>Open</button></span>
       <button class="btn ms-2 dim"><i data-i="pin"></i></button>
       <span class="grp ms-3"><button class="btn sq on"><i data-i="ovl"></i></button><button class="btn drop2"><i data-i="chev"></i></button></span>
       <input class="form-control ms-2" style="width:56px;height:17px" value="UVMap" aria-label="UV map">
      </div>
    </div>
    <div class="stage">
     <svg viewBox="737 47 713 814" preserveAspectRatio="xMidYMid slice" id="uvsvg"></svg>
     <div class="over navb" style="top:8px;right:8px"><button class="btn"><i data-i="zm"></i></button><button class="btn"><i data-i="hand"></i></button></div>
     <div class="over flap start-0" style="top:12px"><i data-i="gt" data-s="8"></i></div>
     <div class="over flap end-0" style="top:12px"><i data-i="lt" data-s="8"></i></div>
    </div>
   </section>
  </div>

  <section class="ed tl">
    <div class="bar ps-2" style="background:#393939">
      <button class="btn drop"><i data-i="clk"></i><i data-i="chev"></i></button>
      <span class="grp cells" style="margin-left:6px"><button class="btn" style="background:#2d2d2d;width:64px;gap:6px">Playback<i data-i="chev"></i></button><button class="btn" style="background:#2d2d2d;width:56px;gap:6px">Keying<i data-i="chev"></i></button></span>
      <nav class="d-flex"><button class="btn mbtn">View</button><button class="btn mbtn">Marker</button></nav>
      <div class="d-flex mx-auto" style="gap:6px"><span class="grp"><button class="btn sq pl"><i data-i="rec"></i></button><button class="btn drop2 off pl"><i data-i="chev"></i></button></span>
      <span class="grp cells" id="play"></span></div>
      <div class="d-flex gap-2" style="padding-right:6px"><input class="form-control num" style="width:68px" value="1" aria-label="Current frame">
       <span class="grp"><button class="btn sq pl"><i data-i="stop"></i></button><span class="nf" style="width:83px"><label for="fs" class="me-auto">Start</label><input id="fs" value="1"></span><span class="nf" style="width:78px"><label for="fe" class="me-auto">End</label><input id="fe" value="250"></span></span></div>
    </div>
    <div class="nums" id="nums"></div>
    <div class="ticks" id="ticks"></div>
    <div class="over scr"></div>
    <div class="over now">1</div>
    <div class="over start-0" style="top:37px;color:#999"><i data-i="gt" data-s="8"></i></div>
    <div class="over end-0" style="top:37px;color:#999"><i data-i="lt" data-s="8"></i></div>
  </section>
 </div>

 <aside class="side d-flex flex-column" style="gap:3px">
  <section class="ed outl">
   <div class="bar" style="padding:1px 7px 0 9px">
    <button class="btn drop"><i data-i="tree"></i><i data-i="chev"></i></button>
    <button class="btn drop" style="margin-left:6px"><i data-i="lay"></i><i data-i="chev"></i></button>
    <span class="icsel mx-auto"><i data-i="find"></i><input class="form-control rounded-1" style="width:102px;height:17px;padding-left:22px" aria-label="Filter outliner"></span>
    <button class="btn drop" style="margin-left:32px"><i data-i="filt"></i><i data-i="chev"></i></button>
    <button class="btn sq" style="margin-left:6px"><i data-i="ncol"></i></button>
   </div>
   <div class="olist" id="olist"></div>
  </section>

  <section class="ed props">
   <div class="bar" style="padding-left:9px">
    <button class="btn drop"><i data-i="prp"></i><i data-i="chev"></i></button>
    <span class="icsel" style="margin-left:86px"><i data-i="find"></i><input class="form-control rounded-1" style="width:102px;height:17px;padding-left:22px" aria-label="Search properties"></span>
   </div>
   <div class="d-flex flex-fill">
    <div class="ptabs" id="ptabs"></div>
    <div class="flex-fill">
     <div class="d-flex align-items-center" style="padding:8px 8px 0 9px"><i data-i="bobj"></i><span style="margin-left:7px">baseEyeLashTop.001</span><i class="ms-auto dim" data-i="pin"></i></div>
     <div style="padding:17px 7px 0 9px"><select class="form-select w-100" style="height:18px" aria-label="Add modifier"><option>Add Modifier</option></select></div>
     <div class="panel">
      <div class="phead"><i style="margin-left:5px;color:#999" data-i="dn" data-s="9"></i><i style="margin:0 10px 0 4px" data-i="subd"></i>
       <span class="grp"><input class="form-control" style="width:127px;height:18px" value="Subdivision" aria-label="Name"><button class="btn sq mf"><i data-i="mesh"></i></button><button class="btn sq on mf"><i data-i="edit"></i></button><button class="btn sq on mf"><i data-i="mon"></i></button><button class="btn sq on mf"><i data-i="snap"></i></button><button class="btn drop2" style="height:18px"><i data-i="chev"></i></button></span>
       <button class="btn ms-1"><i data-i="x"></i></button><i class="ms-auto me-1 dim" data-i="grip" data-s="14"></i></div>
      <div class="grp cells" style="margin:6px 7px 0"><button class="btn sq on flex-fill w-50" style="height:18px">Catmull-Clark</button><button class="btn sq flex-fill w-50" style="height:18px">Simple</button></div>
      <div class="prow" style="margin-top:6px;height:18px"><label for="lv">Levels Viewport</label><input id="lv" class="form-control num rounded-bottom-0" value="4"><span class="dotm"></span></div>
      <div class="prow" style="margin-top:1px;height:18px"><label for="rl">Render</label><input id="rl" class="form-control num" style="border-radius:0 0 3px 3px" value="4"><span class="dotm"></span></div>
      <div class="prow" style="margin-top:7px;height:16px"><span></span><span class="d-flex align-items-center"><input id="od" type="checkbox" class="form-check-input" checked><label for="od">Optimal Display</label></span><span class="dotm"></span></div>
      <div class="d-flex align-items-center" style="margin-top:12px;height:18px;padding-left:18px;color:#c8c8c8"><i data-i="dn" data-s="9" style="color:#999"></i><span style="margin-left:6px">Advanced</span></div>
      <div class="sub"><div class="subg">
       <div class="prow"><span></span><span class="d-flex align-items-center"><input id="ls" type="checkbox" class="form-check-input" checked><label for="ls">Use Limit Surface</label></span><span class="dotm"></span></div>
       <div class="prow"><label for="ql">Quality</label><input id="ql" class="form-control num" value="3"><span class="dotm"></span></div>
       <div class="prow"><label for="us">UV Smooth</label><select id="us" class="form-select" style="height:18px"><option>Keep Corners</option></select><span class="dotm"></span></div>
       <div class="prow"><label for="bs">Boundary Smooth</label><select id="bs" class="form-select" style="height:18px"><option>All</option></select><span class="dotm"></span></div>
       <div class="prow"><span></span><span class="d-flex align-items-center"><input id="uc" type="checkbox" class="form-check-input" checked><label for="uc">Use Creases</label></span><span class="dotm"></span></div>
       <div class="prow"><span></span><span class="d-flex align-items-center"><input id="cn" type="checkbox" class="form-check-input"><label for="cn">Use Custom Normals</label></span><span class="dotm"></span></div>
      </div></div>
     </div>
    </div>
   </div>
  </section>
 </aside>
</div>

<footer class="status d-flex align-items-center">
  <i data-i="m1"></i><span style="margin-left:7px;width:38px">Select</span><i data-i="m1d"></i><span style="margin-left:9px;width:135px">Box Select</span><i data-i="m2"></i><span style="margin-left:8px;width:197px">Rotate View</span><i data-i="m3"></i><span class="ms-2">Call Menu</span>
  <span class="ms-auto">baseEyeLashTop.001 | Verts:20/30 | Edges:26/44 | Faces:8/16 | Tris:32 | Objects:2/2 | 2.91.0</span>
</footer>
<div class="under"></div>
</div>

<script src="https://cdn.jsdelivr.net/npm/bootstrap@5.3.0/dist/js/bootstrap.bundle.min.js"></script>
<script>
const $ = id => document.getElementById(id);
const i = (n, s = '') => `<i data-i="${n}" ${s ? `data-s="${s}"` : ''}></i>`;

// tool shelf, one list per group; the trailing + marks a tool with a fly-out
$('tools').innerHTML = [['a1+','a2'],['a3','a4','a5+','a6'],['a7+','a8'],['a9+','a10','a11','a12+','a13+','a14','a15+','a16+','a17+','a18+','a19+','a20+']]
  .map(g => '<div>' + g.map(t => { const n = t.replace('+',''); return `<button class="btn ${t.endsWith('+') ? 'more' : ''} ${n === 'a5' ? 'on' : ''}">${i(n)}</button>`; }).join('') + '</div>').join('');

// property editor tabs
$('ptabs').innerHTML = [['tool','#ccc'],0,['cam','#ccc'],['out','#ccc'],['lay','#ccc'],['scn','#ccc'],['wld','#c65562'],0,['bobj','#d9853f'],['wrf','#75a7f0'],['part','#6f97d6'],['phys','#6f97d6'],['cons','#6f97d6'],['mesh','#18c48c'],['matl','#cf5d68']]
  .map(t => t ? `<button class="btn ${t[0] === 'wrf' ? 'on' : ''}" style="color:${t[1]}">${i(t[0], 15)}</button>` : '<span class="sep"></span>').join('');

$('play').innerHTML = [1,2,3,4,5,6].map(n => `<button class="btn sq pl">${i('t' + n)}</button>`).join('');
const frames = Array.from({length: 25}, (_, k) => (k + 1) * 10);
$('nums').innerHTML = frames.map(f => `<span>${f}</span>`).join('');
$('ticks').innerHTML = frames.map(() => '<span></span>').join('');

// outliner
const eye = n => `<span class="ms-auto" style="margin-right:9px;color:#ccc">${i(n, 13)}</span>`;
let rows = `<div style="color:#d0d0d0"><span style="margin-left:20px;color:#ddd">${i('coll', 14)}</span><span style="margin-left:6px">Scene Collection</span></div>
<div style="color:#d0d0d0"><span style="margin-left:22px">${i('dn', 8)}</span><span class="oi chipg" style="margin-left:8px;color:#eee">${i('coll', 14)}</span><span>Collection</span><input type="checkbox" class="form-check-input ms-auto chk" style="margin-right:9px" checked aria-label="Include"><span style="margin-right:9px;color:#ddd">${i('eye', 13)}</span></div>`;
['Bot','Top'].forEach((n, k) => rows += `<div class="s${k + 1}"><span class="c0">${i('edit', 14)}</span><span class="tri" style="color:#ccc">${i('rt', 7)}</span><span class="oi" style="color:#dc8c5c;${k ? 'background:#7581a0' : ''}">${i('obj', 14)}</span><span>baseEyeLash${n}.001</span><span style="margin-left:24px;color:#6f9be8">${i('wr', 14)}</span><span class="chip" style="margin-left:2px;color:#1fd6a2">${i('mesh', 14)}</span>${eye('eye')}</div>`);
['eyeLashB0','eyeLashB1','eyeLashB2','eyeLashB3','eyeLashB4','eyeLashB5','eyeLashB6','eyeLashB7','eyeLashesB8','eyeLashesB9',''].forEach(n => rows += `<div><span class="c0"><span class="dotm"></span></span><span class="tri">${i('rt', 7)}</span><span class="oi" style="color:#8d6041">${i('obj', 14)}</span><span class="${n ? '' : 'nameless'}">${n}</span><span style="margin-left:22px;color:#17906a">${i('mesh', 14)}</span>${eye('shut')}</div>`);
$('olist').innerHTML = rows + '<span class="branch"></span>';

// UV islands
const X = [784,934,1084,1234,1384], isl = [[152.5,292,432.5,0],[469,609,749.5,3]];
let s = '<rect x="781.500" y="149" width="604" height="604" fill="#505050" stroke="#858585"/>', over = '';
isl.forEach(([a,b,c,act]) => {
  for (let k = 0; k < 4; k++) s += `<rect x="${X[k]}" y="${a}" width="150" height="${b-a}" fill="${k === act ? '#959595' : '#945f47'}"/><rect x="${X[k]}" y="${b}" width="150" height="${c-b}" fill="#5f5f5f"/>`;
  const low = X.map(x => `M${x} ${b}V${c}`).join('') + `M784 ${c}H1384`, up = X.map(x => `M${x} ${a}V${b}`).join('') + `M784 ${a}H1384M784 ${b}H1384`;
  over += `<path d="${low}" stroke="#222" stroke-opacity=".8" stroke-width="3.500"/><path d="${low}" stroke="#bbb" stroke-width="1"/><path d="${up}" stroke="#2a1c12" stroke-opacity=".85" stroke-width="4"/><path d="${up}" stroke="#dd730c" stroke-width="1.500"/>`;
  X.forEach((x, k) => { over += `<path fill="#ff8a00" d="M${x-1.5} ${a-1.5}h3v3h-3zM${x-1.5} ${b-1.5}h3v3h-3z"/><path fill="#000" d="M${x-1.5} ${c-1.5}h3v3h-3z"/>`;
    if (k < 4) over += `<path fill="#ff8a00" d="M${x+73.5} ${(a+b)/2-1.5}h3v3h-3z"/><path fill="#000" d="M${x+73.5} ${(b+c)/2-1.5}h3v3h-3z"/>`; });
});
for (let k = 1; k < 16; k++) { const p = k * 37.75, o = k % 4 ? .04 : .1; s += `<path stroke="#fff" stroke-opacity="${o}" d="M${781.5+p} 149v604M781.500 ${753-p}h604"/>`; }
s += over + `<circle cx="1084" cy="380" r="84.500" fill="none" stroke="#fff" stroke-width="2.200"/><path stroke="#f23d58" stroke-width="2" d="M1084 380V308"/><path stroke="#82d41c" stroke-width="2" d="M1084 380.500h74"/><path fill="#ff3b57" d="M1080 303h8v8h-8z"/><path fill="#82d41c" d="M1154 376.500h8v8h-8z"/>
<circle cx="781" cy="752.500" r="9.500" fill="none" stroke="#fff" stroke-width="1.500"/><circle cx="781" cy="752.500" r="9.500" fill="none" stroke="#e22" stroke-width="1.500" stroke-dasharray="4 4"/><path stroke="#000" d="M762 752.500h14M786 752.500h14M780.500 734v14M780.500 757v14"/>`;
$('uvsvg').innerHTML = s;

document.querySelectorAll('[data-i]').forEach(e => {
  const n = e.dataset.i, z = e.dataset.s;
  e.innerHTML = `<svg class="ic ${n === 'chev' ? 'ch' : ''}" ${z ? `style="width:${z}px;height:${z}px"` : ''}><use href="#${n}"/></svg>`;
});
</script>
</body>
</html>
